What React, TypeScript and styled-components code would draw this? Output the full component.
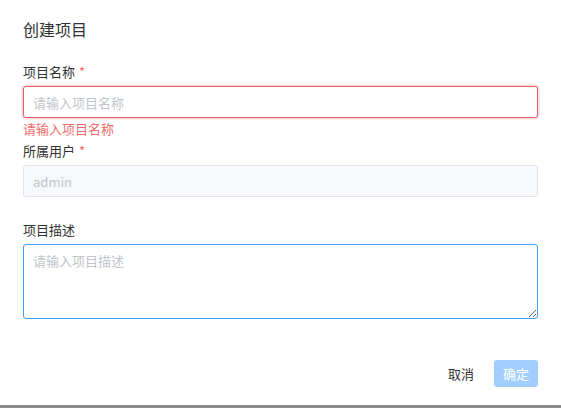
import styled, { createGlobalStyle } from "styled-components";

const GlobalStyle = createGlobalStyle`
  html, body {
    margin: 0;
    padding: 0;
    background: #8c8c8c;
    font-family: "Noto Sans CJK SC", "Noto Sans", sans-serif;
  }
  * {
    box-sizing: border-box;
  }
`;

const Dialog = styled.div`
  width: 561px;
  height: 405px;
  background: #ffffff;
  display: flex;
  flex-direction: column;
  padding: 17px 23px 18px 23px;
`;

const Title = styled.h2`
  margin: 0;
  font-size: 16px;
  line-height: 24px;
  font-weight: 400;
  color: #303133;
`;

const Form = styled.form`
  margin-top: 21px;
  display: flex;
  flex-direction: column;
`;

const FormItem = styled.div<{ $hasError?: boolean }>`
  display: flex;
  flex-direction: column;
  margin-bottom: ${(p) => (p.$hasError ? "3px" : "23px")};
`;

const Label = styled.label`
  font-size: 13px;
  line-height: 20px;
  height: 20px;
  color: #303133;
  margin-bottom: 4px;
`;

const Required = styled.span`
  color: #f56c6c;
  margin-left: 4px;
`;

const Input = styled.input<{ $error?: boolean }>`
  width: 100%;
  height: 32px;
  padding: 0 9px;
  font-family: inherit;
  font-size: 13px;
  color: #606266;
  background: #ffffff;
  border: 1px solid ${(p) => (p.$error ? "#e5606e" : "#dcdfe6")};
  border-radius: 3px;
  outline: none;
  box-shadow: ${(p) => (p.$error ? "0 0 0 1.5px rgba(245, 108, 108, 0.25)" : "none")};

  &::placeholder {
    color: #c0c4cc;
  }

  &:disabled {
    background: #f7f8fb;
    border-color: #e2e4ea;
    color: #c0c4cc;
  }
`;

const ErrorText = styled.div`
  padding-top: 2px;
  font-size: 13px;
  line-height: 18px;
  color: #f56c6c;
`;

const TextArea = styled.textarea`
  width: 100%;
  height: 75px;
  padding: 6px 9px;
  font-family: inherit;
  font-size: 13px;
  line-height: 20px;
  color: #606266;
  border: 1px solid #409eff;
  border-radius: 3px;
  outline: none;
  resize: vertical;

  &::placeholder {
    color: #c0c4cc;
  }
`;

const Footer = styled.div`
  margin-top: auto;
  display: flex;
  justify-content: flex-end;
  align-items: center;
  gap: 20px;
`;

const TextButton = styled.button`
  border: none;
  background: none;
  padding: 0;
  font-family: inherit;
  font-size: 13px;
  line-height: 27px;
  color: #303133;
  cursor: pointer;
`;

const PrimaryButton = styled.button`
  height: 27px;
  padding: 0 9px;
  border: none;
  border-radius: 3px;
  background: #a0cfff;
  color: #ffffff;
  font-family: inherit;
  font-size: 13px;
  line-height: 27px;
  cursor: not-allowed;
`;

export default function App() {
  return (
    <>
      <GlobalStyle />
      <Dialog>
        <Title>创建项目</Title>
        <Form onSubmit={(e) => e.preventDefault()}>
          <FormItem $hasError>
            <Label>
              项目名称<Required>*</Required>
            </Label>
            <Input $error placeholder="请输入项目名称" />
            <ErrorText>请输入项目名称</ErrorText>
          </FormItem>
          <FormItem>
            <Label>
              所属用户<Required>*</Required>
            </Label>
            <Input disabled placeholder="admin" />
          </FormItem>
          <FormItem>
            <Label>项目描述</Label>
            <TextArea placeholder="请输入项目描述" />
          </FormItem>
        </Form>
        <Footer>
          <TextButton type="button">取消</TextButton>
          <PrimaryButton type="button" disabled>
            确定
          </PrimaryButton>
        </Footer>
      </Dialog>
    </>
  );
}
